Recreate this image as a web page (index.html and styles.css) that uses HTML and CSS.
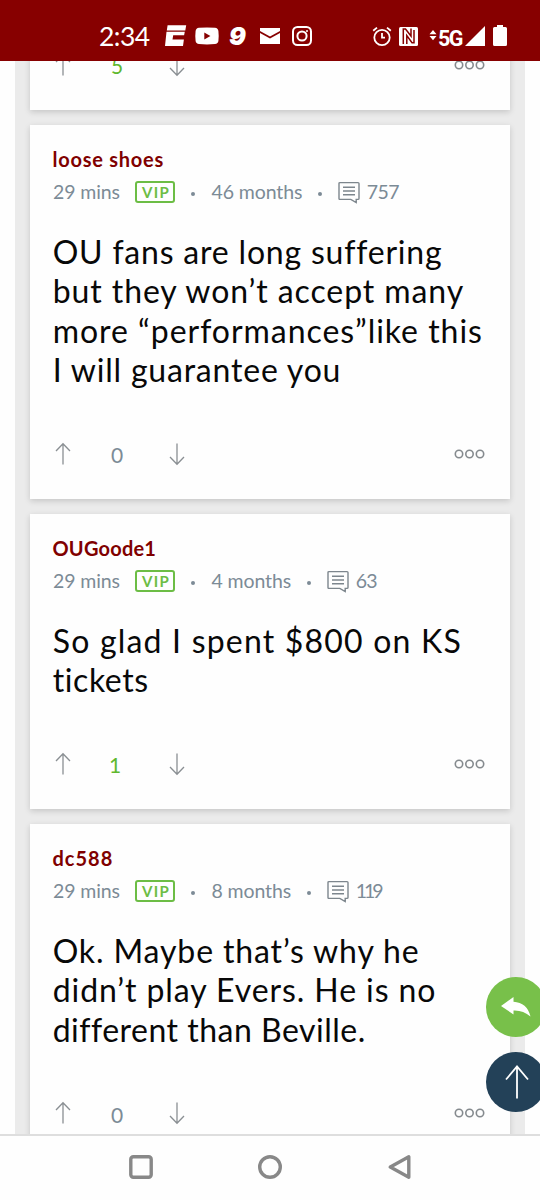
FILE: index.html
```html
<!DOCTYPE html>
<html lang="en">
<head>
<meta charset="utf-8">
<title>Comments</title>
<link rel="stylesheet" href="styles.css">
</head>
<body>
<svg width="0" height="0" class="defs">
  <symbol id="up" viewBox="0 0 16 24"><path d="M8 22.5V2M1 9L8 1.7L15 9"/></symbol>
  <symbol id="down" viewBox="0 0 16 24"><path d="M8 1.5V22M1 15L8 22.3L15 15"/></symbol>
  <symbol id="more" viewBox="0 0 32 10"><circle cx="5" cy="5" r="3.7"/><circle cx="15.5" cy="5" r="3.7"/><circle cx="26" cy="5" r="3.7"/></symbol>
  <symbol id="posts" viewBox="0 0 22 24"><path d="M2 2.6H20Q21 2.6 21 3.6V18.4Q21 19.4 20 19.4H18.2V22.6L12.8 19.4H2Q1 19.4 1 18.4V3.6Q1 2.6 2 2.6ZM5 7.2H17M5 11H17M5 14.8H17"/></symbol>
</svg>

<header class="status">
  <div class="status-left">
    <span class="time">2:34</span>
    <svg class="espn" width="22" height="24" viewBox="0 0 22 24"><path d="M2.600 1.300H21.200L20.300 6.400H1.800ZM1.500 7.800H19.800L19.100 11.200H8.200L7.500 15.600H18.900L18 22H0Z"/></svg>
    <svg class="tube" width="24" height="24" viewBox="0 0 24 24"><path fill-rule="evenodd" d="M4 3.800Q12 3 20 3.800Q23 4 23.400 7Q24 12 23.400 17Q23 19.700 20 20Q12 20.800 4 20Q1 19.700 .6 17Q0 12 .6 7Q1 4 4 3.800ZM9.300 8.600V15.400L15.400 12Z"/></svg>
    <span class="nine">9</span>
    <svg class="mail" width="20" height="24" viewBox="0 0 20 24"><path d="M0 4H20V7L10 12.500L0 7ZM0 9L10 14.500L20 9V20H0Z"/></svg>
    <svg class="insta" width="20" height="24" viewBox="0 0 20 24"><rect x="1" y="3" width="18" height="18" rx="4.500"/><circle cx="10" cy="12" r="4.600"/><circle class="solid" cx="15" cy="7" r="1"/></svg>
  </div>
  <div class="status-right">
    <svg class="alarm" width="20" height="24" viewBox="0 0 20 24"><circle cx="10" cy="13.500" r="7.700"/><path d="M10 9V13.700H13M1.200 6.800L5 3.600M18.800 6.800L15 3.600"/></svg>
    <svg class="nfc" width="19" height="24" viewBox="0 0 19 24"><path class="fill" d="M1.500 3H17.500Q19 3 19 4.500V20.500Q19 22 17.500 22H1.500Q0 22 0 20.500V4.500Q0 3 1.500 3Z"/><path class="cut" d="M4.300 20V5H6.500L12 12V4.500M7.800 20V11.500L13 18.800H15V6"/></svg>
    <svg class="data" width="8" height="24" viewBox="0 0 8 24"><path d="M4 6L7.500 10.200H.5ZM.5 12H7.500L4 16.200Z"/></svg>
    <span class="net">5G</span>
    <svg class="signal" width="20" height="24" viewBox="0 0 20 24"><path d="M20 2V22H0Z"/></svg>
    <svg class="battery" width="14" height="24" viewBox="0 0 14 24"><path d="M4 1H10V3H12.500Q14 3 14 4.500V20.500Q14 22 12.500 22H1.500Q0 22 0 20.500V4.500Q0 3 1.500 3H4Z"/></svg>
  </div>
</header>

<main class="viewport">
  <div class="feed">
    <article class="card card-clipped">
      <footer class="votes">
        <svg class="arrow"><use href="#up"/></svg><span class="count positive">5</span><svg class="arrow"><use href="#down"/></svg><svg class="more"><use href="#more"/></svg>
      </footer>
    </article>

    <article class="card">
      <h2 class="name n1">loose shoes</h2>
      <div class="meta"><span>29 mins</span><span class="vip">VIP</span><i class="dot"></i><span>46 months</span><i class="dot"></i><svg class="posts"><use href="#posts"/></svg><span>757</span></div>
      <p class="body"><span class="a1">OU fans are long suffering</span><br><span class="a2">but they won’t accept many</span><br><span class="a3">more “performances”like this</span><br><span class="a4">I will guarantee you</span></p>
      <footer class="votes">
        <svg class="arrow"><use href="#up"/></svg><span class="count">0</span><svg class="arrow"><use href="#down"/></svg><svg class="more"><use href="#more"/></svg>
      </footer>
    </article>

    <article class="card">
      <h2 class="name n2">OUGoode1</h2>
      <div class="meta"><span>29 mins</span><span class="vip">VIP</span><i class="dot"></i><span>4 months</span><i class="dot"></i><svg class="posts"><use href="#posts"/></svg><span>63</span></div>
      <p class="body"><span class="b1">So glad I spent $800 on KS</span><br><span class="b2">tickets</span></p>
      <footer class="votes">
        <svg class="arrow"><use href="#up"/></svg><span class="count positive one">1</span><svg class="arrow"><use href="#down"/></svg><svg class="more"><use href="#more"/></svg>
      </footer>
    </article>

    <article class="card">
      <h2 class="name n3">dc588</h2>
      <div class="meta"><span>29 mins</span><span class="vip">VIP</span><i class="dot"></i><span>8 months</span><i class="dot"></i><svg class="posts"><use href="#posts"/></svg><span class="tight">119</span></div>
      <p class="body"><span class="c1">Ok. Maybe that’s why he</span><br><span class="c2">didn’t play Evers. He is no</span><br><span class="c3">different than Beville.</span></p>
      <footer class="votes">
        <svg class="arrow"><use href="#up"/></svg><span class="count">0</span><svg class="arrow"><use href="#down"/></svg><svg class="more"><use href="#more"/></svg>
      </footer>
    </article>
  </div>
</main>

<div class="fabs">
  <button class="fab reply" aria-label="Reply"><svg width="30" height="20" viewBox="0 0 30 20"><path d="M0 9L12.500 0V4.800Q26 5.500 29.500 19.500Q22 13 12.500 13.500V17.500Z"/></svg></button>
  <button class="fab top" aria-label="Back to top"><svg width="24" height="34" viewBox="0 0 24 34"><path d="M12 33.500V1.500M1 14.500L12 1.500L23 14.500"/></svg></button>
</div>

<nav class="navbar">
  <svg width="24" height="24" viewBox="0 0 24 24"><rect x="1.800" y="1.800" width="20.400" height="20.400" rx="2.500"/></svg>
  <svg width="24" height="24" viewBox="0 0 24 24"><circle cx="12" cy="12" r="10.300"/></svg>
  <svg width="24" height="24" viewBox="0 0 24 24"><path d="M21.800 1.800V22.200L3.300 12Z"/></svg>
</nav>
</body>
</html>
```
FILE: styles.css
```css
* { box-sizing: border-box; }
body {
  margin: 0;
  width: 540px;
  height: 1200px;
  overflow: hidden;
  position: relative;
  display: flex;
  flex-direction: column;
  background: #fefefe;
  font-family: Lato, "Open Sans", sans-serif;
}
svg { display: block; flex: none; }
.defs { position: absolute; }

.status {
  flex: none;
  height: 61px;
  padding: 24px 33px 0 99px;
  background: #870000;
  color: #fff;
  display: flex;
  justify-content: space-between;
}
.status svg { fill: #fff; }
.status-left, .status-right { display: flex; height: 24px; align-items: center; }
.time { width: 66px; font-size: 26.500px; line-height: 24px; letter-spacing: -.5px; }
.tube { margin-left: 8px; }
.nine { width: 20px; margin-left: 10px; font: italic 900 25px/26px Inter, sans-serif; }
.mail { margin-left: 11px; }
.insta { margin-left: 12px; }
.status .insta { fill: none; stroke: #fff; stroke-width: 2; }
.status .insta .solid { fill: #fff; stroke: none; }
.status .alarm { fill: none; stroke: #fff; stroke-width: 1.800; }
.nfc { margin-left: 7px; }
.status .nfc .cut { fill: none; stroke: #870000; stroke-width: 1.500; }
.data { margin-left: 11px; }
.net { width: 24px; margin: 5px 0 0 1px; font: 700 21.500px/24px Roboto, sans-serif; letter-spacing: -1.500px; }
.signal { margin-left: 3px; }
.battery { margin-left: 8px; }

.viewport { flex: none; height: 1073px; padding: 0 15px; overflow: hidden; }
.feed {
  height: 1073px;
  padding: 0 15px;
  background: #ebebeb;
  display: flex;
  flex-direction: column;
  gap: 15px;
  overflow: hidden;
}
.card {
  flex: none;
  padding: 21px 24px 30.500px 22px;
  background: #fefefe;
  box-shadow: 0 2px 6px rgba(0, 0, 0, .16);
}
.card-clipped { margin-top: -11.500px; padding-top: 0; }
.name {
  margin: 0;
  padding-left: .5px;
  font-size: 20px;
  line-height: 26px;
  font-weight: 700;
  color: #800000;
}
.n1 { letter-spacing: .75px; }
.n2 { letter-spacing: .2px; }
.n3 { letter-spacing: 1px; }
.meta {
  height: 32px;
  margin-top: 4px;
  padding-left: 1px;
  display: flex;
  align-items: center;
  font-size: 19.500px;
  line-height: 32px;
  letter-spacing: -.1px;
  color: #7c8b96;
  white-space: nowrap;
}
.vip {
  width: 40px;
  height: 22px;
  margin-left: 15.500px;
  border: 2px solid #6cbd45;
  border-radius: 3px;
  color: #6cbd45;
  font-size: 15px;
  font-weight: 700;
  line-height: 18px;
  letter-spacing: 1.300px;
  text-align: center;
  text-indent: 1px;
}
.dot { width: 4px; height: 4px; margin: 3px 16px 0; border-radius: 50%; background: #7c8b96; }
.posts { width: 22px; height: 24px; margin-right: 6.500px; fill: none; stroke: #7d868d; stroke-width: 1.400; }
.posts + span { letter-spacing: -.6px; }
.posts + .tight { letter-spacing: -3px; }
.body {
  margin: 23.500px 0 49px;
  padding-left: .7px;
  font-size: 32px;
  line-height: 39.500px;
  color: #080808;
  white-space: nowrap;
}
.a1 { letter-spacing: .8px; }
.a2 { letter-spacing: .91px; }
.a3 { letter-spacing: .97px; }
.a4 { letter-spacing: .8px; }
.b1 { letter-spacing: 1.200px; }
.b2 { letter-spacing: .6px; }
.c1 { letter-spacing: .87px; }
.c2 { letter-spacing: .92px; }
.c3 { letter-spacing: .5px; }
.votes { height: 30px; display: flex; align-items: center; }
.arrow { width: 16px; height: 24px; margin-left: 3px; fill: none; stroke: #8a8f93; stroke-width: 1.300; }
.count { width: 54px; margin-left: 40px; padding-top: 2px; font-size: 21px; line-height: 27px; color: #7c8b96; }
.count + .arrow { margin-left: 3.500px; }
.positive { color: #5fb82e; }
.one { text-indent: -2px; }
.more { width: 32px; height: 10px; margin-left: auto; fill: none; stroke: #858a8e; stroke-width: 1.600; }

.fabs { position: absolute; left: 486px; top: 977px; display: grid; gap: 15px; }
.fab { width: 60px; height: 60px; padding: 0; border: 0; border-radius: 50%; display: grid; place-items: center; }
.reply { background: #78c04a; }
.reply svg { fill: #fff; }
.top { background: #234158; }
.top svg { fill: none; stroke: #fff; stroke-width: 1.800; margin-left: 2px; }

.navbar {
  flex: none;
  height: 66px;
  padding: 0 129px 2px;
  border-top: 2px solid #dedede;
  display: flex;
  align-items: center;
  justify-content: space-between;
}
.navbar svg { fill: none; stroke: #888; stroke-width: 3.400; stroke-linejoin: round; }
```
